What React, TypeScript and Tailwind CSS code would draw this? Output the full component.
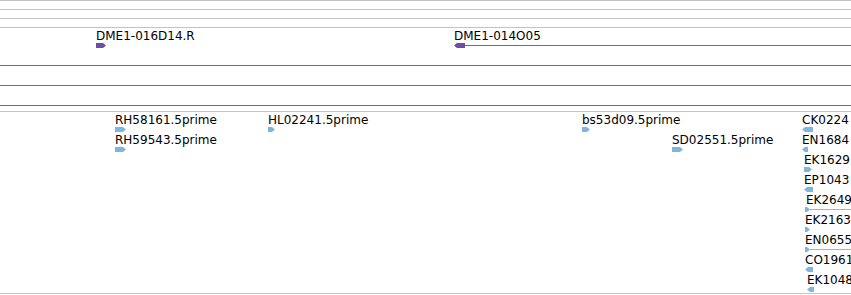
type Feature = {
  label?: string;
  x: number;
  row: number;
  w: number;
  dir: 'left' | 'right' | 'none';
  line?: boolean;
  labelX?: number;
};

const cloneTrack: Feature[] = [
  { label: 'DME1-016D14.R', x: 96, row: 0, w: 10, dir: 'right' },
  { label: 'DME1-014O05', x: 454, row: 0, w: 11, dir: 'left', line: true },
  { x: 0, row: 1, w: 0, dir: 'none', line: true },
  { x: 0, row: 2, w: 0, dir: 'none', line: true },
  { x: 0, row: 3, w: 0, dir: 'none', line: true },
];

const estTrack: Feature[] = [
  { label: 'RH58161.5prime', x: 115, row: 0, w: 11, dir: 'right' },
  { label: 'RH59543.5prime', x: 115, row: 1, w: 11, dir: 'right' },
  { label: 'HL02241.5prime', x: 268, row: 0, w: 7, dir: 'right' },
  { label: 'bs53d09.5prime', x: 582, row: 0, w: 8, dir: 'right' },
  { label: 'SD02551.5prime', x: 672, row: 1, w: 11, dir: 'right' },
  { label: 'CK0224', x: 802, row: 0, w: 11, dir: 'left' },
  { label: 'EN1684', x: 802, row: 1, w: 6, dir: 'left' },
  { label: 'EK1629', x: 804, row: 2, w: 8, dir: 'right' },
  { label: 'EP1043', x: 804, row: 3, w: 9, dir: 'left' },
  { label: 'EK2649', x: 805, row: 4, w: 5, dir: 'right', line: true, labelX: 806 },
  { label: 'EK2163', x: 805, row: 5, w: 5, dir: 'right' },
  { label: 'EN0655', x: 805, row: 6, w: 5, dir: 'right', line: true },
  { label: 'CO1961', x: 805, row: 7, w: 8, dir: 'left' },
  { label: 'EK1048', x: 807, row: 8, w: 7, dir: 'left' },
];

type Palette = { fill: string; line: string };

const purple: Palette = { fill: '#6c4ea6', line: 'bg-[#7a5cb4]' };
const blue: Palette = { fill: '#7fb6dd', line: 'bg-[#86bbe0]' };

function Glyph({ f, palette }: { f: Feature; palette: Palette }) {
  const top = 15 + f.row * 20;
  return (
    <>
      {f.label ? (
        <div
          className="absolute whitespace-nowrap text-[12px] leading-[14px] text-black"
          style={{ left: f.labelX ?? f.x, top: 1 + f.row * 20 }}
        >
          {f.label}
        </div>
      ) : null}
      {f.line ? (
        <div
          className={`absolute right-0 h-px ${palette.line}`}
          style={{ left: f.x + f.w, top: top + 2 }}
        />
      ) : null}
      {f.dir !== 'none' ? (
        <svg
          className="absolute"
          width={f.w}
          height={5}
          viewBox={`0 0 ${f.w} 5`}
          style={{ left: f.x, top }}
        >
          {f.dir === 'right' ? (
            <polygon points={`0,0 ${f.w - 3},0 ${f.w},2.5 ${f.w - 3},5 0,5`} fill={palette.fill} />
          ) : (
            <polygon points={`${f.w},0 3,0 0,2.5 3,5 ${f.w},5`} fill={palette.fill} />
          )}
        </svg>
      ) : null}
    </>
  );
}

function Track({ features, palette, height }: { features: Feature[]; palette: Palette; height: string }) {
  return (
    <div className={`relative overflow-hidden border-t border-[#c3c3c3] ${height}`}>
      {features.map((f, i) => (
        <Glyph key={i} f={f} palette={palette} />
      ))}
    </div>
  );
}

export default function App() {
  return (
    <div className="h-[295px] w-[851px] overflow-hidden bg-white font-['DejaVu_Sans',sans-serif]">
      <div className="h-[9px] border-t border-[#c3c3c3]" />
      <div className="h-[9px] border-t border-[#c3c3c3]" />
      <div className="h-[9px] border-t border-[#c3c3c3]" />
      <Track features={cloneTrack} palette={purple} height="h-[84px]" />
      <Track features={estTrack} palette={blue} height="h-[182px]" />
      <div className="h-[2px] border-t border-[#c3c3c3]" />
    </div>
  );
}
